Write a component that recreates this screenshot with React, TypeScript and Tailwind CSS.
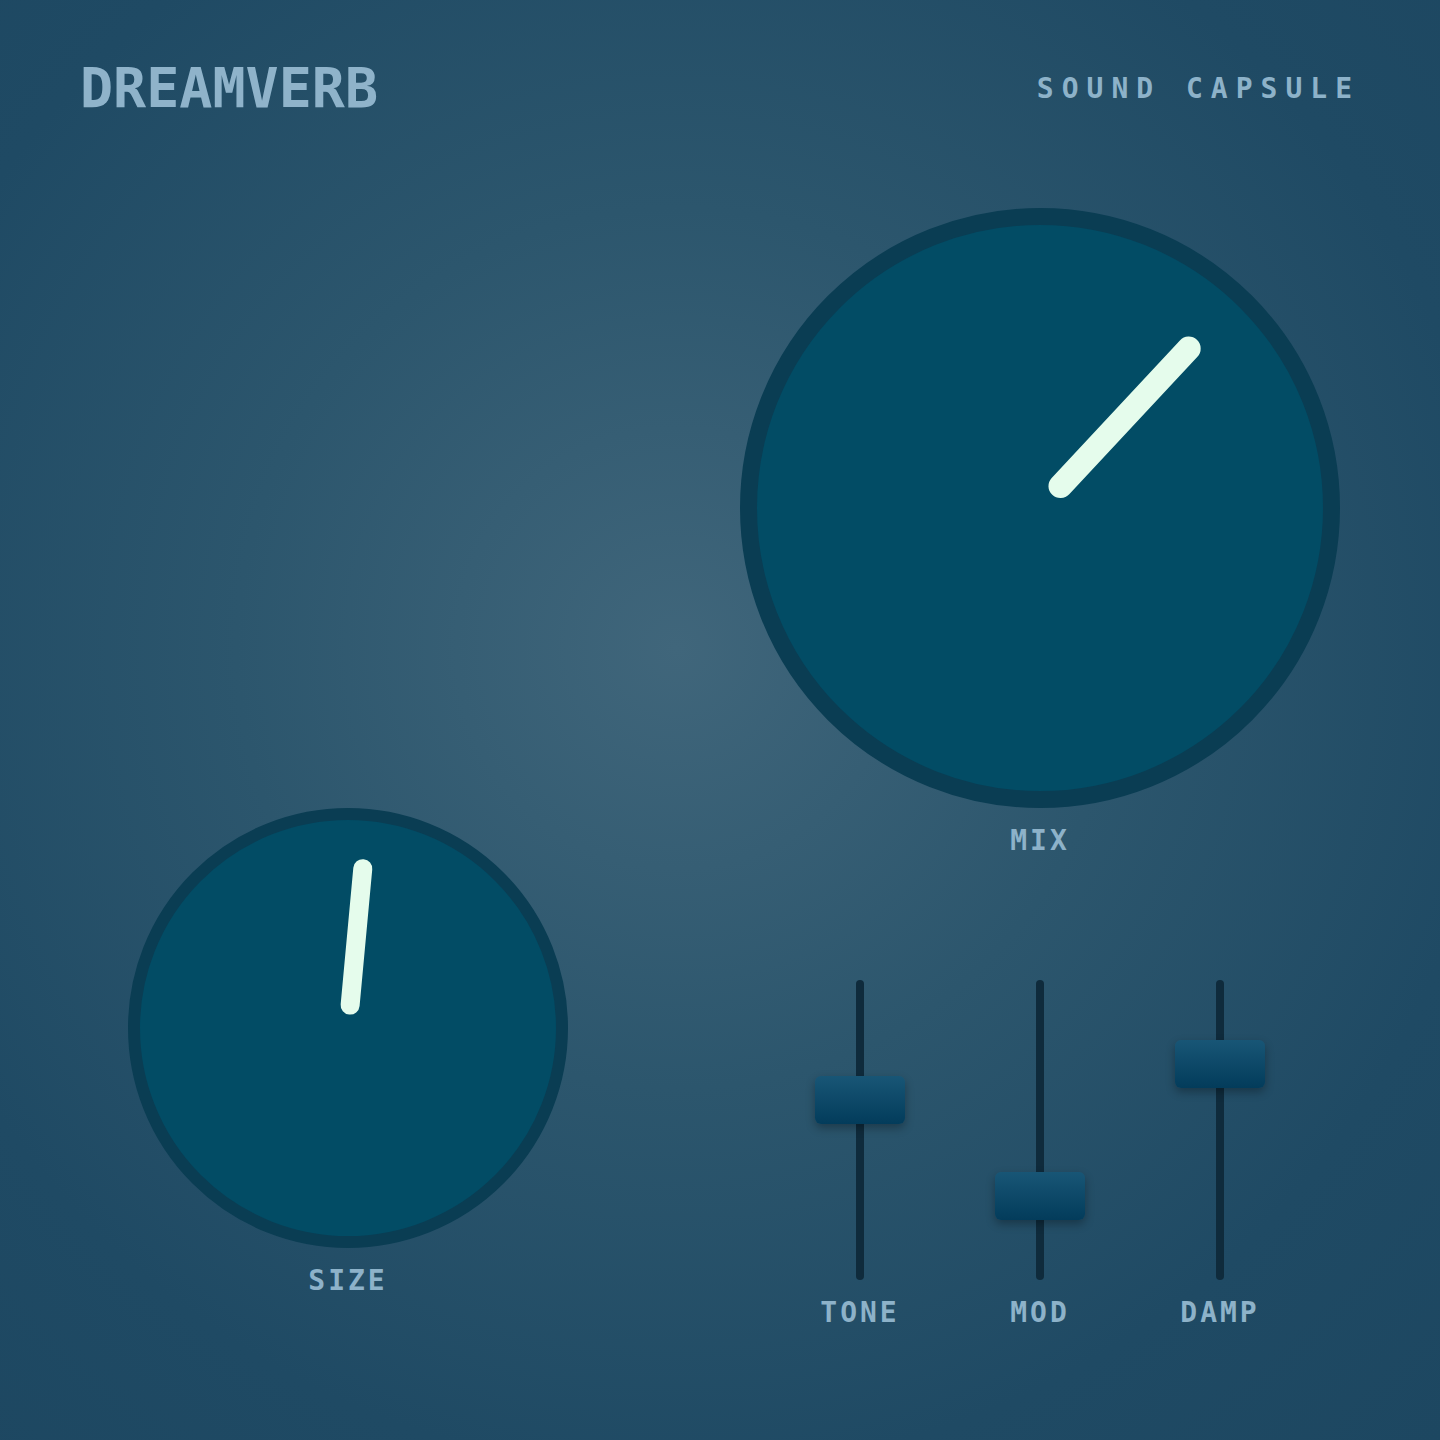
import React from "react";

const font = { fontFamily: '"DejaVu Sans Mono", "Liberation Mono", monospace' };

function Knob({
  size,
  ring,
  angle,
  r1,
  r2,
  stroke,
}: {
  size: number;
  ring: number;
  angle: number;
  r1: number;
  r2: number;
  stroke: number;
}) {
  const c = size / 2;
  const a = (angle * Math.PI) / 180;
  const x1 = c + r1 * Math.sin(a);
  const y1 = c - r1 * Math.cos(a);
  const x2 = c + r2 * Math.sin(a);
  const y2 = c - r2 * Math.cos(a);
  return (
    <div
      className="relative rounded-full bg-[#024c65] border-solid border-[#0a3d53]"
      style={{ width: size, height: size, borderWidth: ring }}
    >
      <svg
        className="absolute"
        style={{ left: -ring, top: -ring }}
        width={size}
        height={size}
        viewBox={`0 0 ${size} ${size}`}
      >
        <line
          x1={x1}
          y1={y1}
          x2={x2}
          y2={y2}
          stroke="#e5fcec"
          strokeWidth={stroke}
          strokeLinecap="round"
        />
      </svg>
    </div>
  );
}

function Slider({ label, pos }: { label: string; pos: number }) {
  return (
    <div className="flex w-[180px] flex-col items-center">
      <div className="relative flex h-[300px] w-[90px] justify-center">
        <div className="h-full w-[8px] rounded-full bg-[#0f2b3c]" />
        <div
          className="absolute left-0 h-[48px] w-[90px] rounded-[6px] bg-gradient-to-b from-[#185676] to-[#033c5b] shadow-[0_4px_10px_rgba(0,0,0,0.3)]"
          style={{ top: pos - 24 }}
        />
      </div>
      <div className="mt-[19px] text-[28px] font-bold leading-none tracking-[3px] text-[#8db2c9]">
        {label}
      </div>
    </div>
  );
}

export default function App() {
  return (
    <div
      className="flex h-[1440px] w-[1440px] flex-col bg-[radial-gradient(circle_at_47%_45%,#40667b_0%,#2c566d_40%,#1f4a64_75%,#1d4761_100%)]"
      style={font}
    >
      <header className="flex h-[176px] items-center justify-between px-[80px]">
        <div className="text-[55px] font-bold leading-none text-[#8fb3ca]">DREAMVERB</div>
        <div className="pt-[2px] text-[28px] font-bold leading-none tracking-[8px] text-[#8db2c9]">
          SOUND CAPSULE
        </div>
      </header>
      <main className="mt-[32px] flex items-start pl-[128px]">
        <div className="flex w-[440px] flex-col items-center pt-[600px]">
          <Knob size={440} ring={12} angle={5.3} r1={23} r2={160} stroke={19} />
          <div className="mt-[19px] text-[28px] font-bold leading-none tracking-[3px] text-[#8db2c9]">
            SIZE
          </div>
        </div>
        <div className="ml-[172px] flex w-[600px] flex-col items-center">
          <Knob size={600} ring={17} angle={43} r1={30} r2={218} stroke={24} />
          <div className="mt-[19px] text-[28px] font-bold leading-none tracking-[3px] text-[#8db2c9]">
            MIX
          </div>
          <div className="mt-[125px] flex justify-center">
            <Slider label="TONE" pos={120} />
            <Slider label="MOD" pos={216} />
            <Slider label="DAMP" pos={84} />
          </div>
        </div>
      </main>
    </div>
  );
}
